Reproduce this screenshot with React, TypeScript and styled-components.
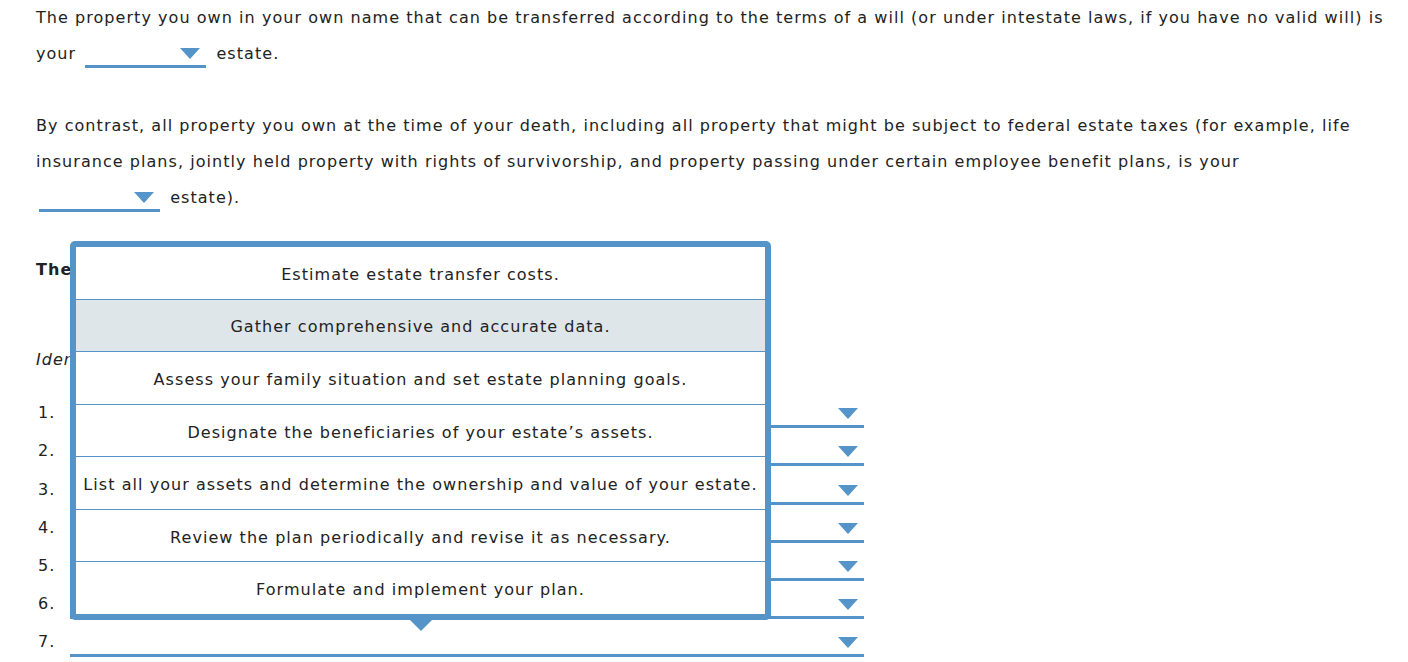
import styled, { createGlobalStyle } from 'styled-components'

const BLUE = '#5594c8'

const GlobalStyle = createGlobalStyle`
  html, body {
    margin: 0;
    padding: 0;
    background: #ffffff;
  }
  body {
    font-family: 'DejaVu Sans', Verdana, sans-serif;
    font-size: 16px;
    letter-spacing: 1.05px;
    color: #222222;
  }
`

const Page = styled.div`
  position: relative;
  width: 1408px;
  height: 662px;
  overflow: hidden;
  padding: 0 10px 0 36px;
  box-sizing: border-box;
`

const Para = styled.p`
  margin: 0 0 36px 0;
  line-height: 36px;
  white-space: nowrap;
`

const Heading = styled.p`
  margin: 0 0 54px 0;
  line-height: 36px;
  font-weight: bold;
  white-space: nowrap;
`

const Instruction = styled.p`
  margin: 0 0 12px 0;
  line-height: 36px;
  font-style: italic;
  white-space: nowrap;
`

const Select = styled.span<{ $width: number }>`
  position: relative;
  display: inline-block;
  box-sizing: border-box;
  width: ${(p) => p.$width}px;
  height: 26px;
  margin: 0 4px 0 3px;
  vertical-align: middle;
  border-bottom: 3px solid ${BLUE};
`

const Arrow = styled.span`
  position: absolute;
  right: 6px;
  bottom: 6px;
  width: 0;
  height: 0;
  border-left: 10px solid transparent;
  border-right: 10px solid transparent;
  border-top: 11px solid ${BLUE};
`

const List = styled.ol`
  list-style: none;
  margin: 0;
  padding: 0;
`

const Row = styled.li`
  display: flex;
  align-items: flex-end;
  height: 38.2px;
`

const Num = styled.span`
  width: 32px;
  padding-left: 2px;
  padding-bottom: 4px;
  line-height: 22px;
`

const RowSelect = styled.span`
  position: relative;
  box-sizing: border-box;
  width: 794px;
  height: 30px;
  border-bottom: 3px solid ${BLUE};
`

const Popup = styled.div`
  position: absolute;
  left: 70px;
  top: 241px;
  width: 701px;
  height: 379px;
  box-sizing: border-box;
  border: 6px solid ${BLUE};
  border-radius: 5px;
  background: #ffffff;
  display: flex;
  flex-direction: column;

  &::after {
    content: '';
    position: absolute;
    left: 50%;
    bottom: -17px;
    margin-left: -12px;
    border-left: 12px solid transparent;
    border-right: 12px solid transparent;
    border-top: 12px solid ${BLUE};
  }
`

const Option = styled.div<{ $active?: boolean }>`
  flex: 1;
  display: flex;
  align-items: center;
  justify-content: center;
  padding-top: 3px;
  text-align: center;
  background: ${(p) => (p.$active ? '#dfe6ea' : '#ffffff')};
  border-bottom: 1px solid ${BLUE};
  white-space: nowrap;

  &:last-child {
    border-bottom: none;
  }
`

const options = [
  'Estimate estate transfer costs.',
  'Gather comprehensive and accurate data.',
  'Assess your family situation and set estate planning goals.',
  'Designate the beneficiaries of your estate\u2019s assets.',
  'List all your assets and determine the ownership and value of your estate.',
  'Review the plan periodically and revise it as necessary.',
  'Formulate and implement your plan.',
]

function App() {
  return (
    <Page>
      <GlobalStyle />
      <Para>
        The property you own in your own name that can be transferred according to the terms of a will (or under intestate laws, if you have no valid will) is
        <br />
        your{' '}
        <Select $width={121}>
          <Arrow />
        </Select>{' '}
        estate.
      </Para>
      <Para>
        By contrast, all property you own at the time of your death, including all property that might be subject to federal estate taxes (for example, life
        <br />
        insurance plans, jointly held property with rights of survivorship, and property passing under certain employee benefit plans, is your
        <br />
        <Select $width={121}>
          <Arrow />
        </Select>{' '}
        estate).
      </Para>
      <Heading>The estate planning process</Heading>
      <Instruction>Identify the correct order of the steps in the estate planning process.</Instruction>
      <List>
        {[1, 2, 3, 4, 5, 6, 7].map((n) => (
          <Row key={n}>
            <Num>{n}.</Num>
            <RowSelect>
              <Arrow />
            </RowSelect>
          </Row>
        ))}
      </List>
      <Popup>
        {options.map((o, i) => (
          <Option key={o} $active={i === 1}>
            {o}
          </Option>
        ))}
      </Popup>
    </Page>
  )
}

export default App
